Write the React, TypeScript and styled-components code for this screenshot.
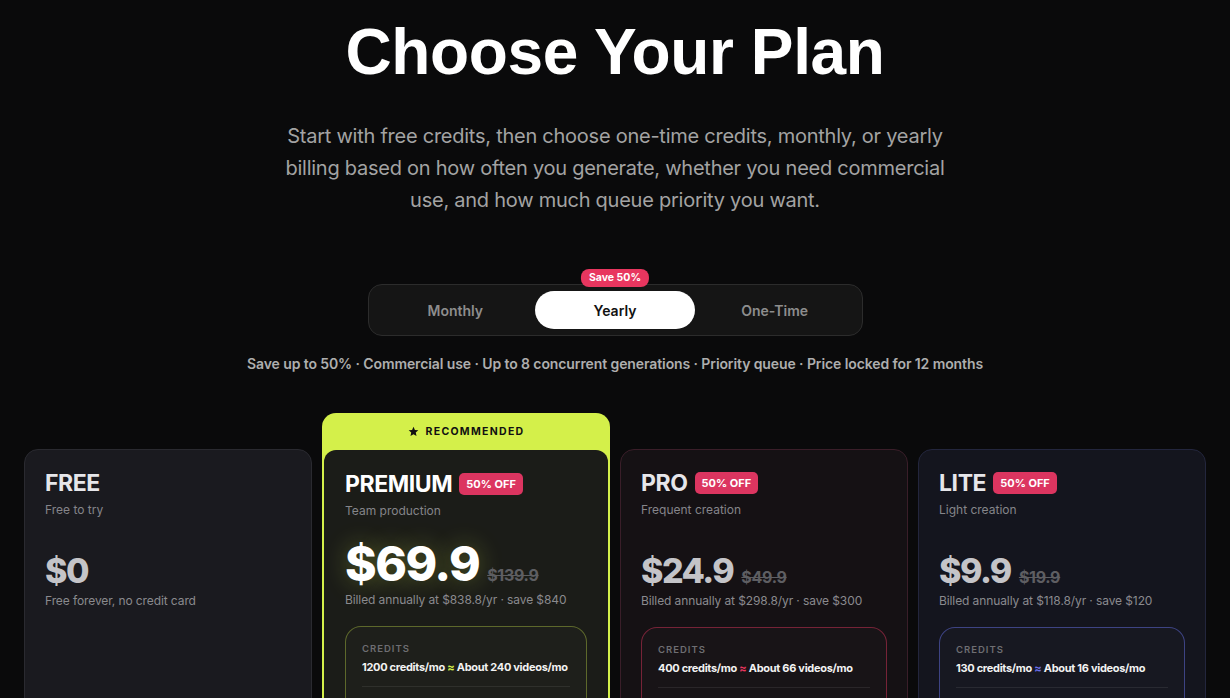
import styled, { createGlobalStyle } from 'styled-components'

const GlobalStyle = createGlobalStyle`
  html, body {
    margin: 0;
    padding: 0;
    background: #0a0a0b;
    height: 100%;
    overflow: hidden;
  }
  body {
    font-family: 'Inter', 'Noto Sans', sans-serif;
    color: #fff;
  }
`

type Tone = 'free' | 'premium' | 'pro' | 'lite'

const toneBg: Record<Tone, string> = {
  free: '#1a1a1f',
  premium: '#1b1c18',
  pro: '#151114',
  lite: '#14151e',
}

const toneBorder: Record<Tone, string> = {
  free: '#2a2a30',
  premium: 'transparent',
  pro: '#3a1e29',
  lite: '#23263d',
}

const boxBorder: Record<Tone, string> = {
  free: '#2e2e34',
  premium: 'rgba(212, 240, 74, 0.35)',
  pro: 'rgba(232, 54, 95, 0.45)',
  lite: 'rgba(100, 110, 230, 0.5)',
}

const approxColor: Record<Tone, string> = {
  free: '#888',
  premium: '#d4f04a',
  pro: '#e8365f',
  lite: '#6b6fe8',
}

const Page = styled.main`
  display: flex;
  flex-direction: column;
  align-items: center;
  padding-top: 14px;
`

const Title = styled.h1`
  margin: 0;
  font-family: 'Liberation Sans', Arial, sans-serif;
  font-size: 64px;
  font-weight: 700;
  letter-spacing: -0.4px;
  line-height: 76px;
  color: #fff;
`

const Lead = styled.p`
  margin: 30px 0 0;
  width: 672px;
  text-align: center;
  font-size: 20px;
  line-height: 32px;
  color: #a3a3a3;
  letter-spacing: -0.25px;
`

const ToggleWrap = styled.div`
  position: relative;
  margin-top: 68px;
`

const SaveBadge = styled.span`
  position: absolute;
  top: -15px;
  left: 50%;
  transform: translateX(-50%);
  background: #e8365f;
  color: #fff;
  font-size: 10.5px;
  font-weight: 700;
  padding: 3px 8px;
  border-radius: 8px;
  line-height: 12px;
  white-space: nowrap;
  z-index: 2;
`

const Toggle = styled.div`
  display: flex;
  width: 495px;
  height: 52px;
  box-sizing: border-box;
  padding: 6px 7px;
  background: #151515;
  border: 1px solid #2c2c2c;
  border-radius: 14px;
`

const TabButton = styled.button<{ $active?: boolean }>`
  flex: 1;
  border: none;
  border-radius: 19px;
  font-family: inherit;
  font-size: 14px;
  font-weight: 600;
  background: ${p => (p.$active ? '#fff' : 'transparent')};
  color: ${p => (p.$active ? '#111' : '#8d8d8d')};
  cursor: pointer;
`

const Perks = styled.p`
  margin: 19px 0 0;
  font-size: 14px;
  font-weight: 600;
  letter-spacing: -0.1px;
  color: #aeaeae;
`

const Cards = styled.div`
  display: flex;
  align-items: flex-start;
  gap: 10px;
  margin-top: 41px;
  width: 1182px;
`

const Featured = styled.div`
  width: 288px;
  flex: none;
  background: #d4f04a;
  border-radius: 14px;
  padding: 0 2px;
  box-sizing: border-box;
`

const FeaturedHead = styled.div`
  height: 37px;
  display: flex;
  align-items: center;
  justify-content: center;
  gap: 7px;
  color: #111;
  font-size: 10.5px;
  font-weight: 700;
  letter-spacing: 1.3px;
`

const Card = styled.div<{ $tone: Tone }>`
  width: ${p => (p.$tone === 'premium' ? '284px' : '288px')};
  flex: none;
  box-sizing: border-box;
  margin-top: ${p => (p.$tone === 'premium' ? '0' : '36px')};
  height: 300px;
  padding: 20px 20px 0;
  background: ${p => toneBg[p.$tone]};
  border: 1px solid ${p => toneBorder[p.$tone]};
  border-radius: ${p => (p.$tone === 'premium' ? '12px 12px 0 0' : '14px')};
  overflow: hidden;
`

const NameRow = styled.div`
  display: flex;
  align-items: center;
  gap: 7px;
  height: 26px;
`

const PlanName = styled.h2<{ $dim?: boolean }>`
  margin: 0;
  font-size: 23px;
  font-weight: 700;
  letter-spacing: -0.4px;
  color: ${p => (p.$dim ? '#e6e6ea' : '#fff')};
`

const OffBadge = styled.span`
  background: #dc3560;
  color: #fff;
  font-size: 11px;
  font-weight: 700;
  padding: 4px 7px;
  border-radius: 5px;
  line-height: 14px;
`

const Tagline = styled.div`
  margin-top: 6px;
  font-size: 12px;
  color: #85858a;
`

const PriceRow = styled.div<{ $big?: boolean }>`
  display: flex;
  align-items: baseline;
  gap: 8px;
  margin-top: ${p => (p.$big ? '22px' : '37px')};
  height: ${p => (p.$big ? '48px' : '35px')};
`

const Price = styled.span<{ $big?: boolean }>`
  font-size: ${p => (p.$big ? '48px' : '34px')};
  font-weight: 800;
  letter-spacing: -1.5px;
  line-height: 1;
  color: ${p => (p.$big ? '#fff' : '#c4c4c8')};
  text-shadow: ${p => (p.$big ? '0 0 24px rgba(212, 240, 74, 0.3)' : 'none')};
`

const OldPrice = styled.span`
  font-size: 16px;
  font-weight: 700;
  color: #5e5e62;
  text-decoration: line-through;
  letter-spacing: -0.3px;
`

const Billing = styled.div`
  margin-top: 4px;
  font-size: 12px;
  color: #8a8a8e;
  letter-spacing: -0.1px;
`

const CreditBox = styled.div<{ $tone: Tone }>`
  margin-top: 19px;
  border: 1px solid ${p => boxBorder[p.$tone]};
  border-radius: 16px;
  padding: 16px 16px 0;
  height: 120px;
  background: rgba(255, 255, 255, 0.015);
`

const BoxLabel = styled.div`
  font-size: 9.5px;
  font-weight: 600;
  letter-spacing: 1px;
  color: #6e6e72;
`

const BoxValue = styled.div`
  margin-top: 6px;
  font-size: 11px;
  font-weight: 700;
  color: #f2f2f2;
  letter-spacing: -0.3px;
  white-space: nowrap;
  padding-bottom: 12px;
  border-bottom: 1px solid rgba(255, 255, 255, 0.08);
`

const Approx = styled.span<{ $tone: Tone }>`
  color: ${p => approxColor[p.$tone]};
`

type Plan = {
  tone: Tone
  name: string
  tagline: string
  price: string
  old?: string
  billing: string
  credits?: string
  videos?: string
}

const plans: Plan[] = [
  { tone: 'free', name: 'FREE', tagline: 'Free to try', price: '$0', billing: 'Free forever, no credit card' },
  {
    tone: 'premium',
    name: 'PREMIUM',
    tagline: 'Team production',
    price: '$69.9',
    old: '$139.9',
    billing: 'Billed annually at $838.8/yr · save $840',
    credits: '1200 credits/mo',
    videos: 'About 240 videos/mo',
  },
  {
    tone: 'pro',
    name: 'PRO',
    tagline: 'Frequent creation',
    price: '$24.9',
    old: '$49.9',
    billing: 'Billed annually at $298.8/yr · save $300',
    credits: '400 credits/mo',
    videos: 'About 66 videos/mo',
  },
  {
    tone: 'lite',
    name: 'LITE',
    tagline: 'Light creation',
    price: '$9.9',
    old: '$19.9',
    billing: 'Billed annually at $118.8/yr · save $120',
    credits: '130 credits/mo',
    videos: 'About 16 videos/mo',
  },
]

const StarIcon = () => (
  <svg width="11" height="11" viewBox="0 0 24 24" fill="#111">
    <path d="M12 1.8l3.1 6.9 7.4.7-5.6 5 1.7 7.4L12 17.9l-6.6 3.9 1.7-7.4-5.6-5 7.4-.7z" />
  </svg>
)

const PlanCard = ({ plan }: { plan: Plan }) => {
  const big = plan.tone === 'premium'
  return (
    <Card $tone={plan.tone}>
      <NameRow>
        <PlanName $dim={!big}>{plan.name}</PlanName>
        {plan.old && <OffBadge>50% OFF</OffBadge>}
      </NameRow>
      <Tagline>{plan.tagline}</Tagline>
      <PriceRow $big={big}>
        <Price $big={big}>{plan.price}</Price>
        {plan.old && <OldPrice>{plan.old}</OldPrice>}
      </PriceRow>
      <Billing>{plan.billing}</Billing>
      {plan.credits && (
        <CreditBox $tone={plan.tone}>
          <BoxLabel>CREDITS</BoxLabel>
          <BoxValue>
            {plan.credits} <Approx $tone={plan.tone}>≈</Approx> {plan.videos}
          </BoxValue>
        </CreditBox>
      )}
    </Card>
  )
}

export default function App() {
  return (
    <>
      <GlobalStyle />
      <Page>
        <Title>Choose Your Plan</Title>
        <Lead>
          Start with free credits, then choose one-time credits, monthly, or yearly billing based on
          how often you generate, whether you need commercial use, and how much queue priority you
          want.
        </Lead>
        <ToggleWrap>
          <SaveBadge>Save 50%</SaveBadge>
          <Toggle>
            <TabButton>Monthly</TabButton>
            <TabButton $active>Yearly</TabButton>
            <TabButton>One-Time</TabButton>
          </Toggle>
        </ToggleWrap>
        <Perks>
          Save up to 50% · Commercial use · Up to 8 concurrent generations · Priority queue · Price
          locked for 12 months
        </Perks>
        <Cards>
          {plans.map(plan =>
            plan.tone === 'premium' ? (
              <Featured key={plan.name}>
                <FeaturedHead>
                  <StarIcon />
                  RECOMMENDED
                </FeaturedHead>
                <PlanCard plan={plan} />
              </Featured>
            ) : (
              <PlanCard key={plan.name} plan={plan} />
            ),
          )}
        </Cards>
      </Page>
    </>
  )
}
